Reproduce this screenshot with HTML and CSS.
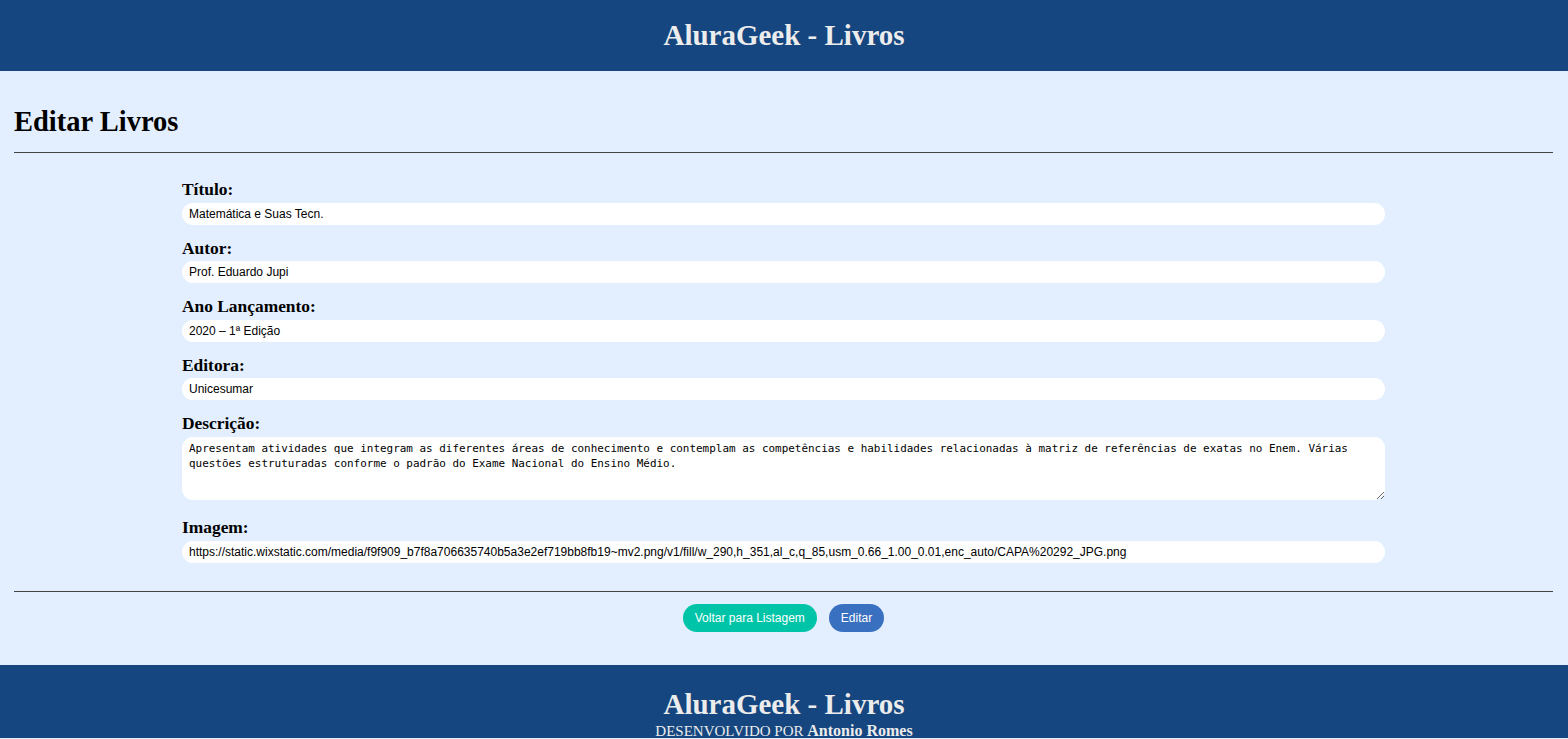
FILE: index.html
```html
<!DOCTYPE html>
<html lang="pt-BR">
<head>
<meta charset="utf-8">
<title>AluraGeek - Livros</title>
<link rel="stylesheet" href="styles.css">
</head>
<body>
<header class="top">
  <h1 class="brand">AluraGeek - Livros</h1>
</header>
<main class="content">
  <h2 class="page-title">Editar Livros</h2>
  <hr class="rule">
  <form class="book-form">
    <div class="field">
      <label class="field-label">Título:</label>
      <input class="field-input" type="text" value="Matemática e Suas Tecn.">
    </div>
    <div class="field">
      <label class="field-label">Autor:</label>
      <input class="field-input" type="text" value="Prof. Eduardo Jupi">
    </div>
    <div class="field">
      <label class="field-label">Ano Lançamento:</label>
      <input class="field-input" type="text" value="2020 – 1ª Edição">
    </div>
    <div class="field">
      <label class="field-label">Editora:</label>
      <input class="field-input" type="text" value="Unicesumar">
    </div>
    <div class="field">
      <label class="field-label">Descrição:</label>
      <textarea class="field-area">Apresentam atividades que integram as diferentes áreas de conhecimento e contemplam as competências e habilidades relacionadas à matriz de referências de exatas no Enem. Várias questões estruturadas conforme o padrão do Exame Nacional do Ensino Médio.</textarea>
    </div>
    <div class="field">
      <label class="field-label">Imagem:</label>
      <input class="field-input" type="text" value="https://static.wixstatic.com/media/f9f909_b7f8a706635740b5a3e2ef719bb8fb19~mv2.png/v1/fill/w_290,h_351,al_c,q_85,usm_0.66_1.00_0.01,enc_auto/CAPA%20292_JPG.png">
    </div>
  </form>
  <hr class="rule rule-bottom">
  <div class="actions">
    <button class="btn btn-back" type="button">Voltar para Listagem</button>
    <button class="btn btn-edit" type="button">Editar</button>
  </div>
</main>
<footer class="bottom">
  <h2 class="brand">AluraGeek - Livros</h2>
  <p class="credit">DESENVOLVIDO POR <strong>Antonio Romes</strong></p>
</footer>
</body>
</html>
```
FILE: styles.css
```css
html, body {
  margin: 0;
  padding: 0;
}
body {
  background: #e3effe;
  font-family: "Liberation Serif", "Times New Roman", serif;
  color: #000;
}
.top {
  background: #15467f;
  height: 71px;
  display: flex;
  align-items: center;
  justify-content: center;
  padding-top: 1px;
  box-sizing: border-box;
}
.brand {
  margin: 0;
  font-size: 29px;
  font-weight: bold;
  color: #ececec;
  line-height: 1.15;
}
.content {
  padding: 36px 15px 33px 14px;
}
.page-title {
  margin: 0;
  font-size: 28.5px;
  line-height: 30px;
  font-weight: bold;
}
.rule {
  border: none;
  border-top: 1px solid #444;
  margin: 15px 0 0 0;
}
.book-form {
  width: 1203px;
  margin: 25px auto 0;
  display: flex;
  flex-direction: column;
  gap: 12px;
}
.field {
  display: flex;
  flex-direction: column;
}
.field-label {
  font-size: 17.4px;
  font-weight: bold;
  line-height: 22.5px;
  margin-bottom: 2px;
}
.field-input {
  height: 22px;
  border: none;
  border-radius: 11px;
  background: #fff;
  padding: 0 7px;
  font-family: "Liberation Sans", Arial, sans-serif;
  font-size: 12px;
  color: #000;
  box-sizing: border-box;
  outline: none;
}
.field-area {
  height: 63px;
  margin-bottom: 4.5px;
  border: none;
  border-radius: 11px;
  background: #fff;
  padding: 4px 7px;
  font-family: "DejaVu Sans Mono", monospace;
  font-size: 10.94px;
  line-height: 15px;
  color: #000;
  box-sizing: border-box;
  resize: vertical;
  outline: none;
}
.rule-bottom {
  margin-top: 28px;
}
.actions {
  display: flex;
  justify-content: center;
  gap: 12px;
  margin-top: 12px;
}
.btn {
  height: 28px;
  border: none;
  border-radius: 14px;
  padding: 0 12px;
  color: #fff;
  font-family: "Liberation Sans", Arial, sans-serif;
  font-size: 12px;
}
.btn-back {
  background: #00c4a7;
}
.btn-edit {
  background: #3a70c0;
}
.bottom {
  background: #15467f;
  text-align: center;
  padding-top: 23px;
  height: 50px;
}
.credit {
  margin: 2px 0 0;
  color: #ececec;
  font-size: 15px;
  line-height: 16px;
}
.credit strong {
  font-size: 16px;
}
```
